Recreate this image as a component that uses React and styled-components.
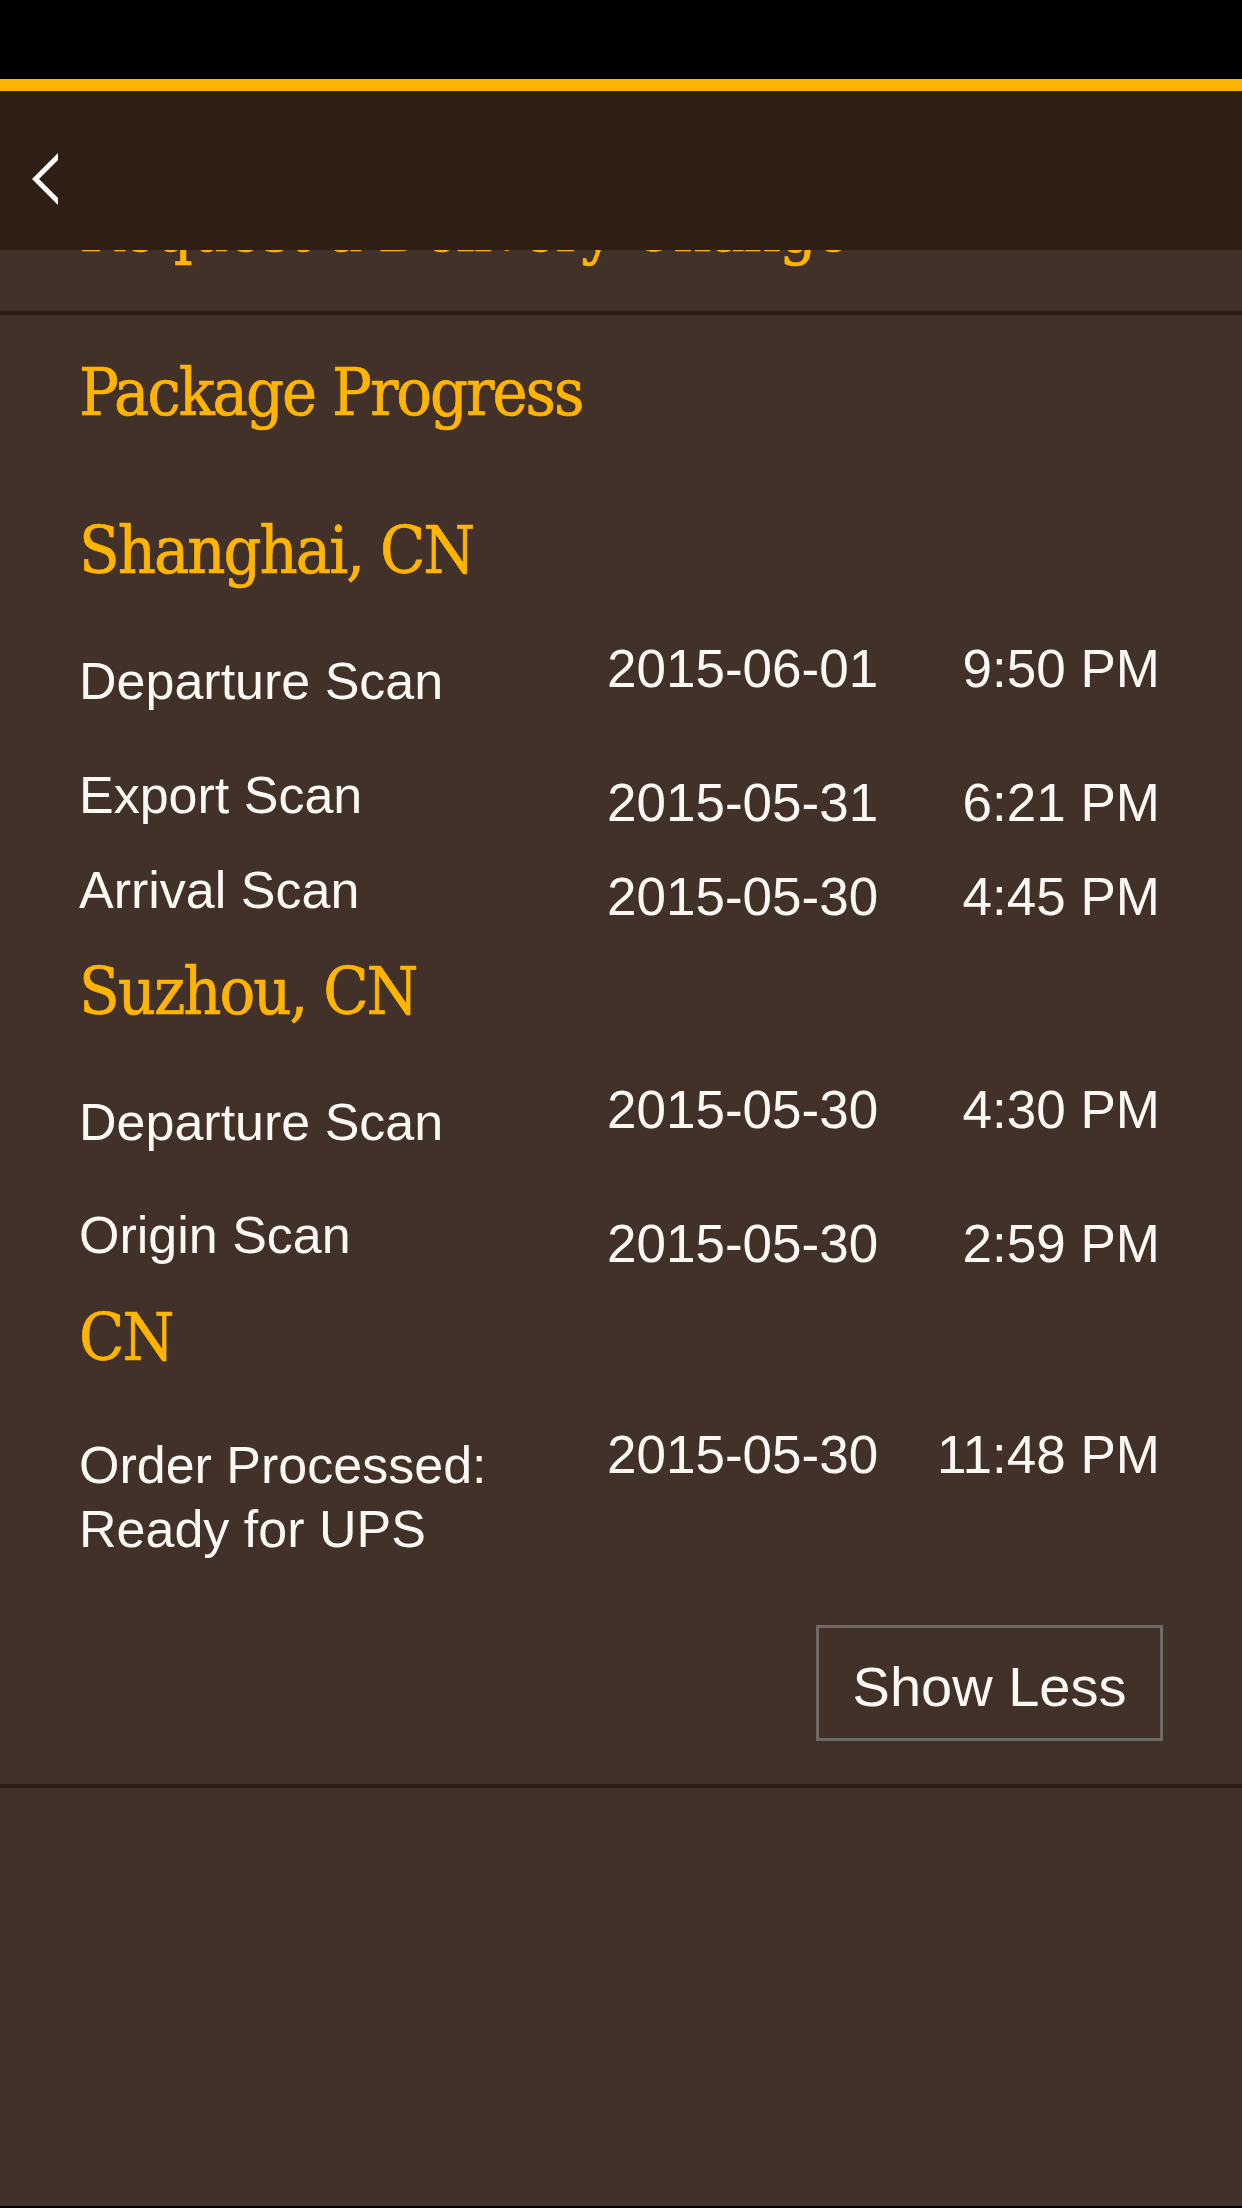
import React from 'react';
import styled, { createGlobalStyle } from 'styled-components';

const GlobalStyle = createGlobalStyle`
  html, body {
    margin: 0;
    padding: 0;
    background: #000;
  }
  * {
    box-sizing: border-box;
  }
`;

const Screen = styled.div`
  width: 1242px;
  height: 2208px;
  display: flex;
  flex-direction: column;
  background: #000;
  overflow: hidden;
`;

const StatusBar = styled.div`
  height: 79px;
  flex: none;
  background: #000;
`;

const AccentBar = styled.div`
  height: 12px;
  flex: none;
  background: #ffb500;
`;

const Viewport = styled.div`
  position: relative;
  flex: 1;
  overflow: hidden;
  background: #413128;
`;

const BottomEdge = styled.div`
  height: 2px;
  flex: none;
  background: #000;
`;

const NavBar = styled.div`
  position: absolute;
  top: 0;
  left: 0;
  right: 0;
  height: 159px;
  z-index: 2;
  display: flex;
  align-items: center;
  padding-left: 32px;
  padding-top: 17px;
  background: #2e1e13;
`;

const BackButton = styled.button`
  border: none;
  background: none;
  padding: 0;
  display: flex;
  cursor: pointer;
`;

const Section = styled.section`
  padding: ${(p) => p.$pad || '0 79px'};
  border-bottom: 4px solid #2a1c11;
`;

const SerifTitle = styled.h2`
  margin: ${(p) => p.$gap || 0}px 0 0;
  font-family: 'DejaVu Serif Condensed', 'DejaVu Serif', serif;
  font-stretch: condensed;
  font-weight: 400;
  font-size: 66px;
  line-height: 80px;
  letter-spacing: -2px;
  color: #ffb500;
  -webkit-text-stroke: 0.7px #ffb500;
  white-space: nowrap;
`;

const ScanRow = styled.div`
  display: grid;
  grid-template-columns: 528px auto 1fr;
  align-items: start;
  margin-top: ${(p) => p.$gap}px;
  font-family: 'Liberation Sans', Arial, sans-serif;
  font-size: 53px;
  line-height: 64px;
  color: #fbf8f4;
`;

const ScanLabel = styled.div`
  padding-top: ${(p) => p.$drop || 0}px;
  font-size: 52px;
`;

const ScanDate = styled.div`
  padding-top: ${(p) => p.$drop || 0}px;
  white-space: nowrap;
`;

const ScanTime = styled.div`
  padding-top: ${(p) => p.$drop || 0}px;
  padding-right: 3px;
  text-align: right;
  white-space: nowrap;
`;

const Actions = styled.div`
  display: flex;
  justify-content: flex-end;
  margin-top: 64px;
`;

const OutlineButton = styled.button`
  width: 347px;
  height: 116px;
  padding: 6px 0 0;
  display: flex;
  align-items: center;
  justify-content: center;
  border: 3px solid #6e6a66;
  background: transparent;
  color: #fbf8f4;
  font-family: 'Liberation Sans', Arial, sans-serif;
  font-size: 56px;
  cursor: pointer;
`;

const history = [
  {
    place: 'Shanghai, CN',
    gap: 78,
    scans: [
      { label: 'Departure Scan', date: '2015-06-01', time: '9:50 PM', gap: 46, labelDrop: 12, dateDrop: 0 },
      { label: 'Export Scan', date: '2015-05-31', time: '6:21 PM', gap: 50, labelDrop: 0, dateDrop: 8 },
      { label: 'Arrival Scan', date: '2015-05-30', time: '4:45 PM', gap: 23, labelDrop: 0, dateDrop: 7 },
    ],
  },
  {
    place: 'Suzhou, CN',
    gap: 23,
    scans: [
      { label: 'Departure Scan', date: '2015-05-30', time: '4:30 PM', gap: 46, labelDrop: 12, dateDrop: 0 },
      { label: 'Origin Scan', date: '2015-05-30', time: '2:59 PM', gap: 49, labelDrop: 0, dateDrop: 9 },
    ],
  },
  {
    place: 'CN',
    gap: 22,
    scans: [
      { label: 'Order Processed: Ready for UPS', date: '2015-05-30', time: '11:48 PM', gap: 45, labelDrop: 10, dateDrop: 0 },
    ],
  },
];

const ChevronLeft = () => (
  <svg width="26" height="52" viewBox="0 0 26 52">
    <polygon points="26,0 26,7 7,26 26,45 26,52 0,26" fill="#ffffff" />
  </svg>
);

export default function App() {
  return (
    <Screen>
      <GlobalStyle />
      <StatusBar />
      <AccentBar />
      <Viewport>
        <NavBar>
          <BackButton aria-label="Back">
            <ChevronLeft />
          </BackButton>
        </NavBar>

        <Section $pad="98px 79px 42px">
          <SerifTitle>Request a Delivery Change</SerifTitle>
        </Section>

        <Section $pad="38px 79px 43px">
          <SerifTitle>Package Progress</SerifTitle>
          {history.map((stop) => (
            <React.Fragment key={stop.place}>
              <SerifTitle $gap={stop.gap}>{stop.place}</SerifTitle>
              {stop.scans.map((scan) => (
                <ScanRow key={scan.label + scan.time} $gap={scan.gap}>
                  <ScanLabel $drop={scan.labelDrop}>{scan.label}</ScanLabel>
                  <ScanDate $drop={scan.dateDrop}>{scan.date}</ScanDate>
                  <ScanTime $drop={scan.dateDrop}>{scan.time}</ScanTime>
                </ScanRow>
              ))}
            </React.Fragment>
          ))}
          <Actions>
            <OutlineButton>Show Less</OutlineButton>
          </Actions>
        </Section>
      </Viewport>
      <BottomEdge />
    </Screen>
  );
}
